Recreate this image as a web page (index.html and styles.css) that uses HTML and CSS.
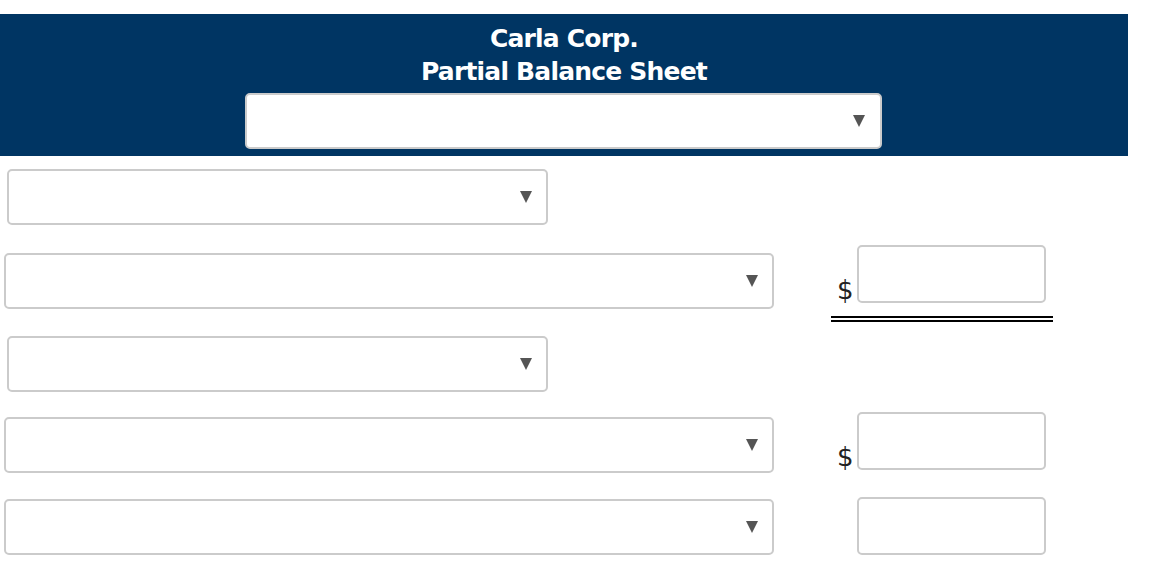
FILE: index.html
```html
<!DOCTYPE html>
<html lang="en">
<head>
<meta charset="utf-8">
<title>Carla Corp. Partial Balance Sheet</title>
<link rel="stylesheet" href="styles.css">
</head>
<body>
<div class="sheet">
  <header class="sheet-head">
    <h1 class="title">Carla Corp.<br>Partial Balance Sheet</h1>
    <div class="select-wrap select-head"><select aria-label="Date"></select></div>
  </header>

  <div class="row row-1">
    <div class="cell-left">
      <div class="select-wrap select-narrow"><select aria-label="Section"></select></div>
    </div>
  </div>

  <div class="row row-2">
    <div class="cell-left pad-28">
      <div class="select-wrap select-wide"><select aria-label="Item"></select></div>
    </div>
    <div class="cell-right pad-20 double-rule">
      <span class="dollar">$</span><input class="amount" type="text" aria-label="Amount">
    </div>
  </div>

  <div class="row row-3">
    <div class="cell-left">
      <div class="select-wrap select-narrow"><select aria-label="Section"></select></div>
    </div>
  </div>

  <div class="row row-4">
    <div class="cell-left pad-25">
      <div class="select-wrap select-wide"><select aria-label="Item"></select></div>
    </div>
    <div class="cell-right pad-20">
      <span class="dollar">$</span><input class="amount" type="text" aria-label="Amount">
    </div>
  </div>

  <div class="row row-5">
    <div class="cell-left pad-26">
      <div class="select-wrap select-wide"><select aria-label="Item"></select></div>
    </div>
    <div class="cell-right pad-24">
      <span class="dollar dollar-blank"></span><input class="amount" type="text" aria-label="Amount">
    </div>
  </div>
</div>
</body>
</html>
```

FILE: styles.css
```css
html, body {
  margin: 0;
  padding: 0;
  background: #ffffff;
}

body {
  font-family: "DejaVu Sans", Verdana, sans-serif;
  color: #000;
}

.sheet {
  padding-top: 14px;
}

.sheet-head {
  width: 1128px;
  background: #003563;
  padding: 8px 0 7px;
  display: flex;
  flex-direction: column;
  align-items: center;
}

.title {
  margin: 0;
  font-family: "DejaVu Sans", Verdana, sans-serif;
  font-weight: bold;
  font-size: 25px;
  line-height: 33px;
  letter-spacing: -0.8px;
  color: #ffffff;
  text-align: center;
}

.select-wrap {
  position: relative;
  box-sizing: border-box;
  height: 56px;
  background: #fff;
  border: 2px solid #cbcbcb;
  border-radius: 5px;
}

.select-wrap select {
  appearance: none;
  -webkit-appearance: none;
  width: 100%;
  height: 100%;
  border: 0;
  background: transparent;
  outline: none;
  margin: 0;
  padding: 0 40px 0 10px;
}

.select-wrap::after {
  content: "";
  position: absolute;
  right: 14px;
  top: 50%;
  margin-top: -6px;
  width: 0;
  height: 0;
  border-left: 6px solid transparent;
  border-right: 6px solid transparent;
  border-top: 12px solid #555;
  pointer-events: none;
}

.select-head {
  width: 637px;
  margin-top: 5px;
  margin-left: -2px;
}

.select-head::after {
  right: 15px;
}

.row {
  display: flex;
  align-items: flex-start;
}

.cell-left {
  box-sizing: border-box;
  width: 831px;
  padding-left: 4px;
}

.cell-right {
  box-sizing: border-box;
  width: 222px;
  padding-left: 6px;
  display: flex;
  align-items: flex-end;
}

.select-narrow {
  width: 541px;
  margin-left: 3px;
}

.select-wide {
  width: 770px;
}

.row-1 { margin-top: 13px; }
.row-3 { margin-top: 14px; }

.pad-20 { margin-top: 20px; }
.pad-24 { margin-top: 24px; }
.pad-25 { margin-top: 25px; }
.pad-26 { margin-top: 26px; }
.pad-28 { margin-top: 28px; }

.double-rule {
  padding-bottom: 13px;
  border-bottom: 6px double #000;
}

.dollar {
  display: inline-block;
  width: 20px;
  font-size: 26px;
  line-height: 26px;
  color: #222;
}

.amount {
  box-sizing: border-box;
  width: 189px;
  height: 58px;
  margin: 0;
  border: 2px solid #cbcbcb;
  border-radius: 5px;
  background: #fff;
  outline: none;
  padding: 0 8px;
}
```
